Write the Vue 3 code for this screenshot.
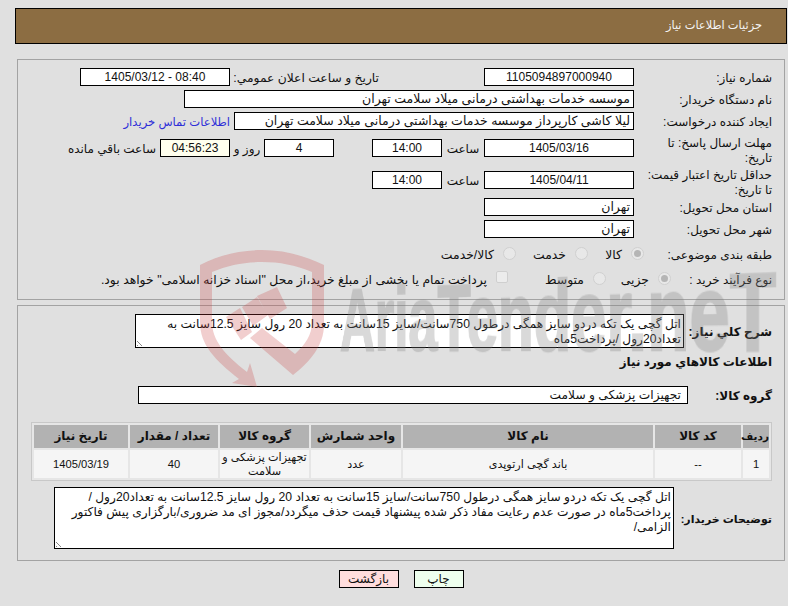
<script setup>
const cols = [
  { h: 'رديف', v: '1', w: 26 },
  { h: 'کد کالا', v: '--', w: 86 },
  { h: 'نام کالا', v: 'باند گچی ارتوپدی', w: 250 },
  { h: 'واحد شمارش', v: 'عدد', w: 90 },
  { h: 'گروه کالا', v: 'تجهیزات پزشکی و سلامت', w: 89 },
  { h: 'تعداد / مقدار', v: '40', w: 88 },
  { h: 'تاریخ نیاز', v: '1405/03/19', w: 94 }
]
</script>

<template>
  <div class="page" dir="rtl">
    <header class="head">جزئیات اطلاعات نیاز</header>

    <section class="panel p1">
      <div class="row">
        <label class="lb">شماره نیاز:</label>
        <div class="f w150 c">1105094897000940</div>
        <span class="tx pub">تاریخ و ساعت اعلان عمومي:</span>
        <div class="f w150 c" dir="ltr">1405/03/12 - 08:40</div>
      </div>
      <div class="row r2">
        <label class="lb">نام دستگاه خریدار:</label>
        <div class="f w450">موسسه خدمات بهداشتی درمانی میلاد سلامت تهران</div>
      </div>
      <div class="row r2">
        <label class="lb">ایجاد کننده درخواست:</label>
        <div class="f w400">لیلا کاشی کارپرداز موسسه خدمات بهداشتی درمانی میلاد سلامت تهران</div>
        <a class="link">اطلاعات تماس خریدار</a>
      </div>
      <div class="row r4">
        <label class="lb two">مهلت ارسال پاسخ: تا<br>تاریخ:</label>
        <div class="f w150 c">1405/03/16</div>
        <span class="tx sa">ساعت</span>
        <div class="f w70 c">14:00</div>
        <div class="f w70 c days">4</div>
        <span class="tx rz">روز و</span>
        <div class="f w70 c yellow">04:56:23</div>
        <span class="tx rem">ساعت باقي مانده</span>
      </div>
      <div class="row r5">
        <label class="lb two">حداقل تاریخ اعتبار قیمت:<br>تا تاریخ:</label>
        <div class="f w150 c">1405/04/11</div>
        <span class="tx sa">ساعت</span>
        <div class="f w70 c">14:00</div>
      </div>
      <div class="row r6">
        <label class="lb">استان محل تحویل:</label>
        <div class="f w150">تهران</div>
      </div>
      <div class="row r2">
        <label class="lb">شهر محل تحویل:</label>
        <div class="f w150">تهران</div>
      </div>
      <div class="row r8">
        <label class="lb l8">طبقه بندی موضوعی:</label>
        <span class="radio on"></span><span class="opt w43">کالا</span>
        <span class="radio"></span><span class="opt w59">خدمت</span>
        <span class="radio"></span><span class="opt">کالا/خدمت</span>
      </div>
      <div class="row r9">
        <label class="lb l9">نوع فرآیند خرید :</label>
        <span class="radio on"></span><span class="opt w52">جزیی</span>
        <span class="radio"></span><span class="opt w85">متوسط</span>
        <span class="check"></span>
        <span class="opt">پرداخت تمام یا بخشی از مبلغ خرید،از محل "اسناد خزانه اسلامی" خواهد بود.</span>
      </div>
    </section>

    <section class="panel p2">
      <div class="row s1">
        <label class="lb bold">شرح کلي نیاز:</label>
        <div class="ta ta1">اتل گچی یک تکه دردو سایز همگی درطول 750سانت/سایز 15سانت به تعداد 20 رول سایز 12.5سانت به تعداد20رول /پرداخت5ماه<i class="grip"></i></div>
      </div>
      <div class="sub bold">اطلاعات کالاهاي مورد نیاز</div>
      <div class="row s3">
        <label class="lb bold">گروه کالا:</label>
        <div class="f w550">تجهیزات پزشکی و سلامت</div>
      </div>
      <div class="tbl">
        <div class="col" v-for="c in cols" :key="c.h" :style="{ width: c.w + 'px' }">
          <div class="th">{{ c.h }}</div>
          <div class="td">{{ c.v }}</div>
        </div>
      </div>
      <div class="row s5">
        <label class="lb bold">توضیحات خریدار:</label>
        <div class="ta ta2">اتل گچی یک تکه دردو سایز همگی درطول 750سانت/سایز 15سانت به تعداد 20 رول سایز 12.5سانت به تعداد20رول / پرداخت5ماه در صورت عدم رعایت مفاد ذکر شده پیشنهاد قیمت حذف میگردد/مجوز ای مد ضروری/بارگزاری پیش فاکتور الزامی/<i class="grip"></i></div>
      </div>
    </section>

    <div class="btns">
      <button class="btn print">چاپ</button>
      <button class="btn back">بازگشت</button>
    </div>

    <div class="wm" dir="ltr" aria-hidden="true">
      <svg class="shield" width="788" height="606" viewBox="0 0 788 606">
        <path class="sh" d="M200 265 C220 255 240 250 262 250 C285 250 305 256 324 265 L324 325 C324 345 310 362 293 375 L250 338 L262 328 L295 354 C305 345 312 335 312 322 L312 272 C295 265 280 262 262 262 C245 262 228 265 212 272 L212 322 C212 340 225 355 247 372 L250 363 L257 387 L232 383 L239 379 C215 360 200 345 200 322 Z"/>
        <path class="sh" d="M226 317 L240 308 L252 332 L241 340 Z M242 307 L257 297 L268 315 L253 326 Z M257 296 L277 287 L287 308 L270 319 Z"/>
      </svg>
      <div class="mark">AriaTender.neT</div>
    </div>
  </div>
</template>

<style>
html, body { margin: 0; background: #e0e0e0; }
</style>

<style scoped>
.page {
  position: relative;
  width: 788px;
  height: 606px;
  overflow: hidden;
  background: #e0e0e0;
  box-sizing: border-box;
  padding: 8px 1px 0 15px;
  font: 12px/15px "Liberation Sans", "DejaVu Sans", sans-serif;
  color: #111;
}
.head {
  height: 36px;
  box-sizing: border-box;
  border: 1px solid #000;
  background: #8c6d42;
  color: #f4f4f4;
  line-height: 33px;
  padding-right: 24px;
  font-size: 11.4px;
}
.panel {
  width: 768px;
  box-sizing: border-box;
  border: 1px solid #a3a3a3;
  margin-right: 2px;
  padding-right: 12px;
}
.p1 { height: 241px; margin-top: 15px; padding-top: 8px; }
.p2 { height: 256px; margin-top: 5px; padding-top: 8px; }
.row { display: flex; align-items: flex-start; height: 18px; }
.r2 { margin-top: 4px; }
.r4 { margin-top: 9px; }
.r5 { margin-top: 14px; }
.r6 { margin-top: 9px; }
.r8 { margin-top: 7px; }
.r9 { margin-top: 7px; }
.lb { width: 138px; height: 18px; flex: none; line-height: 20px; white-space: nowrap; }
.lb.two { line-height: 14.5px; margin-top: -3px; }
.l8 { width: 128px; }
.l9 { width: 101px; }
.f {
  height: 18px;
  box-sizing: border-box;
  border: 1px solid #000;
  background: #fff;
  line-height: 16px;
  padding: 0 3px;
  white-space: nowrap;
  flex: none;
  font-size: 12.5px;
}
.c { text-align: center; font-size: 12px; }
.w70 { width: 70px; }
.w150 { width: 150px; }
.w400 { width: 400px; }
.w450 { width: 450px; }
.w550 { width: 550px; font-size: 12.2px; padding-right: 6px; }
.yellow { background: #ffffee; }
.tx { line-height: 20px; white-space: nowrap; }
.pub { margin: 0 105px 0 4px; width: 145px; font-size: 12.3px; }
.sa { width: 42px; text-align: center; }
.days { margin-right: 38px; }
.rz { width: 34px; text-align: center; }
.rem { margin-right: 4px; }
.link { color: #2f2fd8; line-height: 20px; margin-right: 4px; white-space: nowrap; font-size: 11.6px; }
.radio {
  width: 13px; height: 13px; flex: none;
  border: 1px solid #d0d0d0; border-radius: 50%;
  background: #e8e8e8; box-sizing: border-box;
  margin-top: 2px; position: relative;
}
.radio.on::after {
  content: ""; position: absolute; inset: 2px;
  border-radius: 50%; background: #b5b5b5;
}
.check {
  width: 12px; height: 12px; flex: none; box-sizing: border-box;
  border: 1px solid #cfcfcf; border-radius: 2px; background: #ececec;
  margin-top: 1px;
}
.opt { line-height: 20px; white-space: nowrap; padding-right: 9px; font-size: 12.4px; box-sizing: border-box; flex: none; }
.w43 { width: 43px; }
.w59 { width: 59px; }
.w52 { width: 52px; }
.w85 { width: 85px; }
.bold { font-weight: 700; }
.s1, .s5 { align-items: center; height: auto; }
.ta {
  position: relative;
  box-sizing: border-box;
  border: 1px solid #000;
  background: #fff;
  padding: 2px;
  line-height: 15px;
  font-size: 12.2px;
  flex: none;
}
.s1 .lb { width: 88px; }
.ta1 { width: 549px; height: 34px; }
.ta2 { width: 620px; height: 62px; }
.grip {
  position: absolute; left: 1px; bottom: 1px; width: 8px; height: 8px;
  background: repeating-linear-gradient(45deg, #888 0 1px, transparent 1px 3px);
  clip-path: polygon(0 0, 100% 100%, 0 100%);
}
.sub { margin-top: 7px; line-height: 15px; }
.s3 { margin-top: 16px; }
.s3 .lb { width: 84px; }
.tbl {
  display: flex; gap: 2px;
  width: 741px; box-sizing: border-box;
  margin-top: 18px; padding: 2px;
  border: 1px solid #c8c8c8;
  background: #e6e6e6;
  height: 59px;
  font-size: 11.2px;
}
.col { flex: none; display: flex; flex-direction: column; gap: 2px; }
.th { height: 23px; background: #b2b2b2; text-align: center; font-weight: 700; line-height: 22px; white-space: nowrap; font-size: 12px; }
.col:first-child .th { font-size: 10.5px; }
.td { height: 28px; background: #f5f5f5; text-align: center; display: flex; align-items: center; justify-content: center; line-height: 14px; }
.s5 { margin-top: 6px; }
.s5 .lb { width: 98px; font-size: 11px; }
.btns { display: flex; justify-content: center; gap: 15px; margin-top: 9px; }
.btn {
  height: 18px; box-sizing: border-box; border: 1px solid #000;
  font: 12px/14px "Liberation Sans", "DejaVu Sans", sans-serif; padding: 0; color: #111;
}
.print { width: 50px; background: #eeffee; }
.back { width: 60px; background: #ffdddd; }
.wm { position: absolute; left: 0; top: 0; width: 788px; height: 606px; overflow: hidden; pointer-events: none; }
.shield { position: absolute; left: 0; top: 0; }
.sh { fill: #c83c3c; fill-opacity: .25; }
.mark {
  position: absolute; left: 340px; top: 276px;
  font: 700 87px/87px "Liberation Sans", sans-serif;
  white-space: nowrap;
  color: #808080;
  -webkit-text-stroke: 2px #808080;
  opacity: .3;
  transform-origin: 0 73.6px;
  transform: perspective(500px) rotateY(-18deg) scaleX(.57);
}
</style>
